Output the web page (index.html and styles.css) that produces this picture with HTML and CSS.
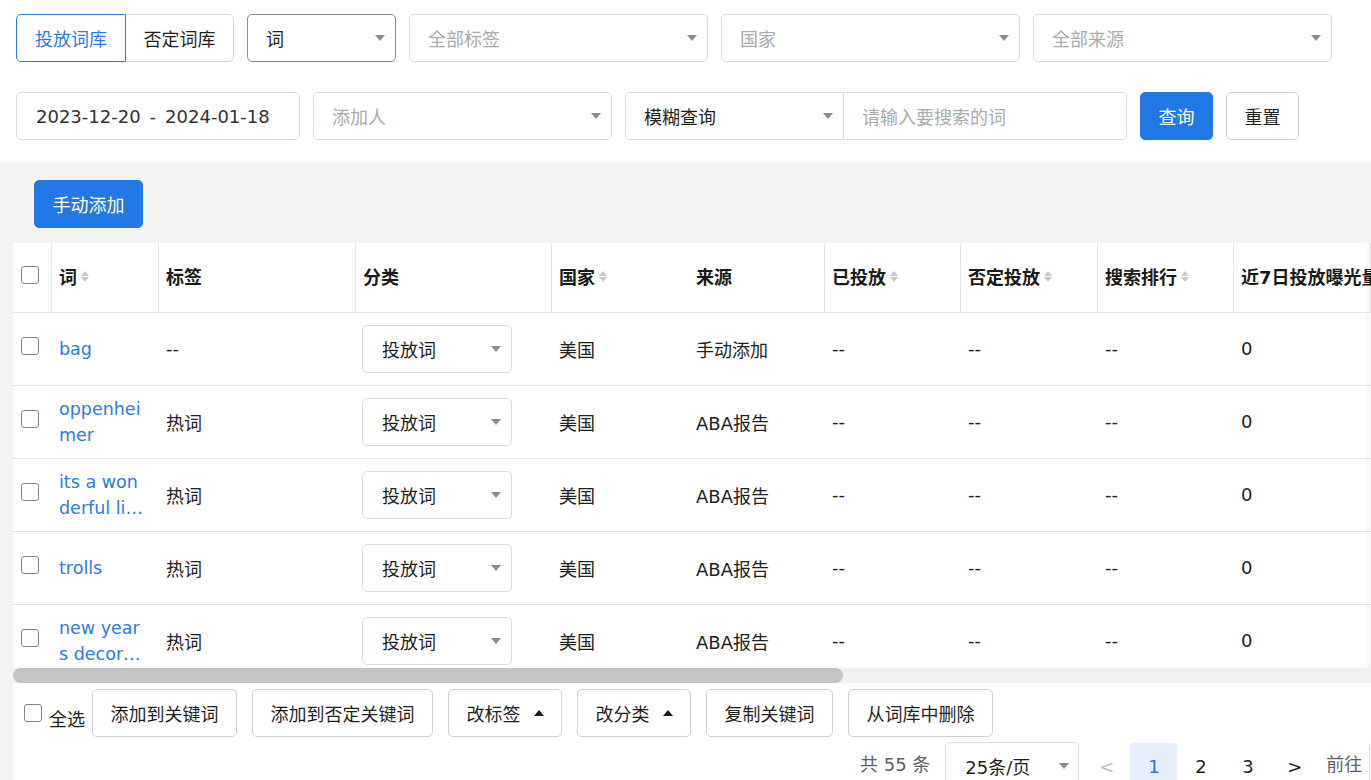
FILE: index.html
```html
<!DOCTYPE html>
<html lang="zh-CN">
<head>
<meta charset="utf-8">
<title>词库</title>
<link rel="stylesheet" href="styles.css">
</head>
<body>
<div class="filters">
  <div class="frow">
    <div class="seg">
      <button class="seg-btn active">投放词库</button>
      <button class="seg-btn">否定词库</button>
    </div>
    <div class="sel sel-dark w149"><span class="val">词</span><i class="arrow"></i></div>
    <div class="sel w299"><span class="ph">全部标签</span><i class="arrow"></i></div>
    <div class="sel w299"><span class="ph">国家</span><i class="arrow"></i></div>
    <div class="sel w299"><span class="ph">全部来源</span><i class="arrow"></i></div>
  </div>
  <div class="frow">
    <div class="date"><span>2023-12-20</span><span class="sep">-</span><span>2024-01-18</span></div>
    <div class="sel w299"><span class="ph">添加人</span><i class="arrow"></i></div>
    <div class="combo">
      <div class="sel combo-sel"><span class="val">模糊查询</span><i class="arrow"></i></div>
      <div class="combo-input"><span class="ph">请输入要搜索的词</span></div>
    </div>
    <button class="btn primary">查询</button>
    <button class="btn">重置</button>
  </div>
</div>

<div class="main">
  <div class="toolbar"><button class="btn primary">手动添加</button></div>
  <div class="card">
    <div class="tview">
      <div class="thead">
        <div class="th c0 bd"><span class="cb"></span></div>
        <div class="th c1 bd">词<span class="sort"><i class="up"></i><i class="down"></i></span></div>
        <div class="th c2 bd">标签</div>
        <div class="th c3 bd">分类</div>
        <div class="th c4">国家<span class="sort"><i class="up"></i><i class="down"></i></span></div>
        <div class="th c5 bd">来源</div>
        <div class="th c6 bd">已投放<span class="sort"><i class="up"></i><i class="down"></i></span></div>
        <div class="th c7 bd">否定投放<span class="sort"><i class="up"></i><i class="down"></i></span></div>
        <div class="th c8 bd">搜索排行<span class="sort"><i class="up"></i><i class="down"></i></span></div>
        <div class="th c9 bd">近7日投放曝光量<span class="sort"><i class="up"></i><i class="down"></i></span></div>
        <div class="th c10">操作</div>
      </div>

      <div class="trow">
        <div class="td c0"><span class="cb"></span></div>
        <div class="td c1"><a class="word">bag</a></div>
        <div class="td c2">--</div>
        <div class="td c3"><div class="sel cat"><span class="val">投放词</span><i class="arrow"></i></div></div>
        <div class="td c4">美国</div>
        <div class="td c5">手动添加</div>
        <div class="td c6">--</div>
        <div class="td c7">--</div>
        <div class="td c8">--</div>
        <div class="td c9">0</div>
        <div class="td c10"></div>
      </div>
      <div class="trow">
        <div class="td c0"><span class="cb"></span></div>
        <div class="td c1"><a class="word">oppenheimer</a></div>
        <div class="td c2">热词</div>
        <div class="td c3"><div class="sel cat"><span class="val">投放词</span><i class="arrow"></i></div></div>
        <div class="td c4">美国</div>
        <div class="td c5">ABA报告</div>
        <div class="td c6">--</div>
        <div class="td c7">--</div>
        <div class="td c8">--</div>
        <div class="td c9">0</div>
        <div class="td c10"></div>
      </div>
      <div class="trow">
        <div class="td c0"><span class="cb"></span></div>
        <div class="td c1"><a class="word">its a wonderful life movie</a></div>
        <div class="td c2">热词</div>
        <div class="td c3"><div class="sel cat"><span class="val">投放词</span><i class="arrow"></i></div></div>
        <div class="td c4">美国</div>
        <div class="td c5">ABA报告</div>
        <div class="td c6">--</div>
        <div class="td c7">--</div>
        <div class="td c8">--</div>
        <div class="td c9">0</div>
        <div class="td c10"></div>
      </div>
      <div class="trow">
        <div class="td c0"><span class="cb"></span></div>
        <div class="td c1"><a class="word">trolls</a></div>
        <div class="td c2">热词</div>
        <div class="td c3"><div class="sel cat"><span class="val">投放词</span><i class="arrow"></i></div></div>
        <div class="td c4">美国</div>
        <div class="td c5">ABA报告</div>
        <div class="td c6">--</div>
        <div class="td c7">--</div>
        <div class="td c8">--</div>
        <div class="td c9">0</div>
        <div class="td c10"></div>
      </div>
      <div class="trow">
        <div class="td c0"><span class="cb"></span></div>
        <div class="td c1"><a class="word">new years decorations</a></div>
        <div class="td c2">热词</div>
        <div class="td c3"><div class="sel cat"><span class="val">投放词</span><i class="arrow"></i></div></div>
        <div class="td c4">美国</div>
        <div class="td c5">ABA报告</div>
        <div class="td c6">--</div>
        <div class="td c7">--</div>
        <div class="td c8">--</div>
        <div class="td c9">0</div>
        <div class="td c10"></div>
      </div>
    </div>

    <div class="hscroll"><div class="thumb"></div></div>

    <div class="footer">
      <div class="actions">
        <label class="selall"><span class="cb"></span><span class="selall-text">全选</span></label>
        <button class="btn">添加到关键词</button>
        <button class="btn">添加到否定关键词</button>
        <button class="btn">改标签<i class="caret-up"></i></button>
        <button class="btn">改分类<i class="caret-up"></i></button>
        <button class="btn">复制关键词</button>
        <button class="btn">从词库中删除</button>
      </div>
      <div class="pager">
        <span class="total">共 55 条</span>
        <div class="sel psize"><span class="val">25条/页</span><i class="arrow"></i></div>
        <span class="pitem first disabled">&lt;</span>
        <span class="pitem active">1</span>
        <span class="pitem">2</span>
        <span class="pitem">3</span>
        <span class="pitem">&gt;</span>
        <span class="goto">前往</span>
        <span class="goto-input">1</span>
      </div>
    </div>
  </div>
</div>
</body>
</html>
```

FILE: styles.css
```css
* { box-sizing: border-box; }
html, body { margin: 0; padding: 0; overflow: hidden; }
body {
  width: 1371px;
  height: 780px;
  font-family: "DejaVu Sans", "Noto Sans CJK SC", sans-serif;
  font-size: 18px;
  color: #1f1f1f;
  background: #f4f4f4;
}
button { font: inherit; cursor: pointer; }

/* ---------- filters ---------- */
.filters {
  background: #fff;
  padding: 14px 0 22px 16px;
  display: flex;
  flex-direction: column;
  gap: 30px;
}
.frow { display: flex; gap: 13px; height: 48px; }
.frow > * { flex: none; }
.seg { display: flex; }
.seg-btn {
  height: 48px;
  padding: 0;
  background: #fff;
  color: #1f1f1f;
  border: 1px solid #d6d6d6;
}
.seg-btn.active {
  width: 110px;
  border-color: #2a7be4;
  color: #2a7be4;
  border-radius: 5px 0 0 5px;
}
.seg-btn + .seg-btn {
  width: 108px;
  border-left: none;
  border-radius: 0 5px 5px 0;
}

.sel {
  height: 48px;
  display: flex;
  align-items: center;
  padding: 0 10px 0 18px;
  background: #fff;
  border: 1px solid #dcdcdc;
  border-radius: 5px;
  white-space: nowrap;
}
.sel-dark { border-color: #8f8f8f; }
.w149 { width: 149px; }
.w299 { width: 299px; }
.val { color: #1f1f1f; }
.ph { color: #ababab; }
.arrow {
  flex: none;
  margin-left: auto;
  width: 0;
  height: 0;
  border-left: 5.5px solid transparent;
  border-right: 5.5px solid transparent;
  border-top: 6px solid #8c8c8c;
}

.date {
  width: 284px;
  height: 48px;
  display: flex;
  align-items: center;
  padding-left: 19px;
  border: 1px solid #dcdcdc;
  border-radius: 5px;
  color: #333;
  white-space: nowrap;
}
.date .sep { margin: 0 9px; }

.combo { display: flex; }
.combo-sel { width: 219px; border-radius: 5px 0 0 5px; }
.combo-input {
  width: 283px;
  height: 48px;
  display: flex;
  align-items: center;
  padding-left: 18px;
  border: 1px solid #dcdcdc;
  border-left: none;
  border-radius: 0 5px 5px 0;
  background: #fff;
}

.btn {
  flex: none;
  height: 48px;
  padding: 0 17.5px;
  background: #fff;
  color: #1f1f1f;
  border: 1px solid #d0d0d0;
  border-radius: 5px;
  display: inline-flex;
  align-items: center;
  justify-content: center;
  white-space: nowrap;
}
.btn.primary {
  background: #2279e5;
  border-color: #2279e5;
  color: #fff;
}

/* ---------- main ---------- */
.main { padding: 18px 0 0 13px; }
.toolbar { padding-left: 21px; margin-bottom: 15px; }
.toolbar .btn { width: 109px; padding: 0; }

.card {
  background: #fff;
  width: 1358px;
  height: 600px;
  overflow: hidden;
}
.tview {
  position: relative;
  height: 425px;
  overflow: hidden;
}
.tview::after {
  content: "";
  position: absolute;
  top: 0;
  right: 0;
  bottom: 0;
  width: 6px;
  background: linear-gradient(to right, rgba(0,0,0,0), rgba(0,0,0,0.05));
}
.thead, .trow {
  display: flex;
  width: 1700px;
  border-bottom: 1px solid #e6e6e6;
}
.thead { height: 70px; }
.trow { height: 73px; }

.th, .td {
  flex: none;
  display: flex;
  align-items: center;
  padding-left: 7px;
  white-space: nowrap;
}
.th { font-weight: 700; color: #1a1a1a; padding-bottom: 3px; }
.th.bd { border-right: 1px solid #e6e6e6; }
.td { color: #222; padding-bottom: 1px; }

.c0 { width: 39px; padding-left: 8px; }
.c1 { width: 107px; }
.c2 { width: 197px; }
.c3 { width: 196px; }
.c4 { width: 137px; }
.c5 { width: 136px; }
.c6 { width: 136px; }
.c7 { width: 137px; }
.c8 { width: 136px; }
.c9 { width: 137px; }
.c10 { width: 300px; }
.td.c3 { padding-left: 6px; padding-bottom: 0; }

.cb {
  display: inline-block;
  flex: none;
  width: 18px;
  height: 18px;
  border: 1.5px solid #858585;
  border-radius: 3px;
  background: #fff;
}
.th .cb { margin-bottom: 3px; }
.td .cb { margin-bottom: 5px; }

.sort {
  display: inline-flex;
  flex-direction: column;
  gap: 1px;
  margin-left: 4px;
}
.sort i {
  display: block;
  width: 0;
  height: 0;
  border-left: 4.5px solid transparent;
  border-right: 4.5px solid transparent;
}
.sort .up { border-bottom: 5px solid #c8c9cc; }
.sort .down { border-top: 5px solid #c8c9cc; }

.word {
  display: -webkit-box;
  -webkit-line-clamp: 2;
  -webkit-box-orient: vertical;
  overflow: hidden;
  white-space: normal;
  word-break: break-all;
  width: 88px;
  font-size: 17.5px;
  line-height: 26px;
  color: #2a7be4;
  cursor: pointer;
}
.sel.cat { width: 150px; padding-left: 19px; }

.hscroll {
  height: 15px;
  background: #f1f1f1;
}
.thumb {
  width: 830px;
  height: 15px;
  background: #c4c4c4;
  border-radius: 8px;
}

/* ---------- footer ---------- */
.footer { padding: 6px 0 0 11px; }
.actions { display: flex; align-items: center; gap: 15px; }
.selall {
  flex: none;
  display: flex;
  align-items: center;
  gap: 7px;
  margin-right: -8px;
}
.selall-text { margin-top: 9px; }
.caret-up {
  display: inline-block;
  width: 0;
  height: 0;
  margin-left: 13px;
  border-left: 5.5px solid transparent;
  border-right: 5.5px solid transparent;
  border-bottom: 6px solid #1a1a1a;
}

.pager {
  display: flex;
  align-items: flex-start;
  margin-top: 5px;
  margin-left: 836px;
  white-space: nowrap;
}
.pager > * { flex: none; }
.total {
  height: 46px;
  line-height: 46px;
  color: #5e5e5e;
  margin-right: 15px;
}
.sel.psize { width: 134px; padding: 0 9px 0 19px; }
.pitem {
  width: 47px;
  height: 46px;
  margin-top: 1px;
  display: flex;
  align-items: center;
  justify-content: center;
  color: #1f1f1f;
  border-radius: 4px;
}
.pitem.first { margin-left: 4px; }
.pitem.disabled { color: #c0c0c0; }
.pitem.active { background: #e7effc; color: #2279e5; }
.goto {
  height: 46px;
  line-height: 46px;
  margin-left: 8px;
  color: #5e5e5e;
}
.goto-input {
  width: 60px;
  height: 48px;
  margin-left: 7px;
  border: 1px solid #dcdcdc;
  border-radius: 5px;
  display: flex;
  align-items: center;
  justify-content: center;
}
```
